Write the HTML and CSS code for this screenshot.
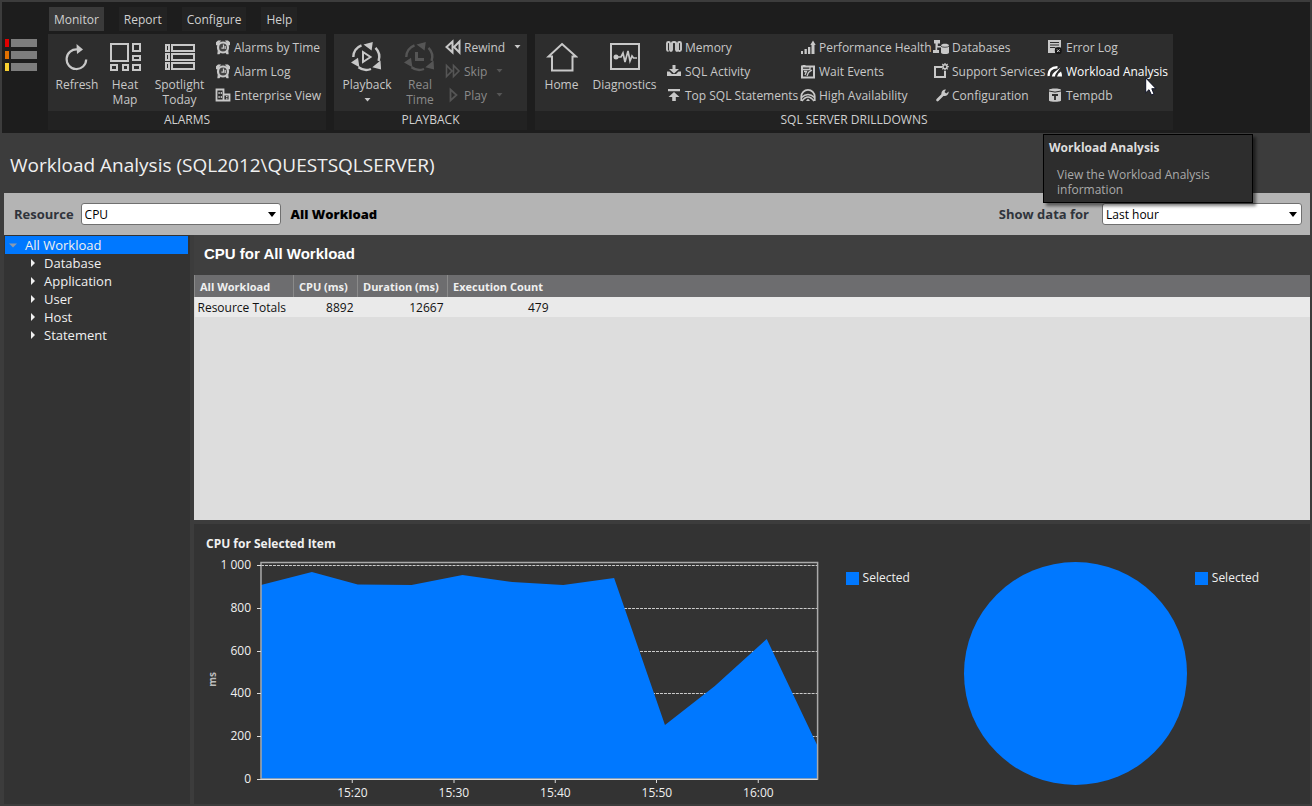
FILE: index.html
```html
<!DOCTYPE html>
<html lang="en">
<head>
<meta charset="utf-8">
<title>Workload Analysis</title>
<link rel="stylesheet" href="styles.css">
</head>
<body class="window">
<svg class="defs" aria-hidden="true">
  <symbol id="clock" viewBox="0 0 16 16"><path d="M3 1.500L13 1.500 15 5.500 13.500 10 14 15H11L8 14 5 15H2L2.500 10 1 5.500z" fill="currentColor" opacity=".15"/><circle cx="8" cy="8.500" r="5" fill="none" stroke="currentColor" stroke-width="2.200"/><path d="M1 6V3.200L3 1.600H6L2.800 6.500zM15 6V3.200L13 1.600H10L13.200 6.500zM2.800 11.500l2.700 2-1 1.700H2.400zM13.200 11.500l-2.700 2 1 1.700h2.100z" fill="currentColor"/><path d="M8.500 5.500V9.200H6.400M10.200 7v3" fill="none" stroke="currentColor" stroke-width="1.200"/></symbol>
  <symbol id="cycle" viewBox="0 0 32 32"><g fill="none" stroke="currentColor" stroke-width="2.4"><path d="M24.5 6.8A13 13 0 0 1 27.6 20"/><path d="M20 28A13 13 0 0 1 7.5 26.3"/><path d="M2.3 16A13 13 0 0 1 10.5 4.3"/></g><path d="M12.5 3.500L21.8 1l-1.200 8.500zM29.500 19.500l.6 9-8.800-2.300zM0 21.500l7-4.800 1.400 9.600z" fill="currentColor"/></symbol>
  <symbol id="down" viewBox="0 0 7 4"><path d="M.5 0H6.500L3.500 3.500z" fill="currentColor"/></symbol>
</svg>

<header class="ribbon">
  <svg class="logo" viewBox="0 0 32 32" aria-label="Spotlight"><path fill="#e00000" d="M0 0h4v8H0z"/><path fill="#e07000" d="M0 12h4v8H0z"/><path fill="#f8d030" d="M0 24h4v8H0z"/><path fill="#7d7d7d" d="M6 0h26v8H6zM6 12h26v8H6zM6 24h26v8H6z"/></svg>
  <div class="ribbon-main">
    <nav class="tabs">
      <button class="tab active">Monitor</button>
      <button class="tab">Report</button>
      <button class="tab">Configure</button>
      <button class="tab">Help</button>
    </nav>
    <div class="groups">
      <section class="group alarms">
        <div class="tools">
          <button class="big"><svg viewBox="0 0 32 32"><path d="M16.5 8.5A9.8 9.8 0 1 0 25.2 18.5" fill="none" stroke="currentColor" stroke-width="2.2"/><path d="M15.5 3L22 8.4 16 13z" fill="currentColor"/></svg>Refresh</button>
          <button class="big"><svg viewBox="0 0 32 32"><path d="M2 3h17v17H2zM24 3h7v7h-7zM24 15h7v4h-7zM2 24h6v5H2zM14 24h5v5h-5zM24 24h7v5h-7z" fill="none" stroke="currentColor" stroke-width="2"/></svg>Heat<br>Map</button>
          <button class="big"><svg viewBox="0 0 32 32"><path d="M2 4h3v6H2zM8 4h22v6H8zM2 13h3v6H2zM8 13h22v6H8zM2 22h3v6H2zM8 22h22v6H8z" fill="none" stroke="currentColor" stroke-width="2"/></svg>Spotlight<br>Today</button>
          <div class="col">
            <button class="small"><svg><use href="#clock"/></svg>Alarms by Time</button>
            <button class="small"><svg><use href="#clock"/></svg>Alarm Log</button>
            <button class="small"><svg viewBox="0 0 16 16"><path d="M1.500 2.500h7v11h-7zM8.500 7.500h6v6h-6" fill="none" stroke="currentColor" stroke-width="1.800"/><path d="M3.500 5h1.200v2H3.500zM5.700 5h1.200v2H5.700zM3.500 9h1.200v2H3.500zM5.700 9h1.200v2H5.700zM11 9h1.500v1.200H11zM11 11.200h1.500v1.200H11z" fill="currentColor"/></svg>Enterprise View</button>
          </div>
        </div>
        <h2 class="caption">ALARMS</h2>
      </section>
      <section class="group playback">
        <div class="tools">
          <button class="big"><svg viewBox="0 0 32 32"><use href="#cycle"/><path d="M12 11l7.500 5-7.500 5z" fill="none" stroke="currentColor" stroke-width="2"/></svg>Playback<svg class="arrow"><use href="#down"/></svg></button>
          <button class="big" disabled><svg viewBox="0 0 32 32"><use href="#cycle"/><path d="M12.500 11v7.500H20" fill="none" stroke="currentColor" stroke-width="3"/></svg>Real<br>Time</button>
          <div class="col">
            <button class="small"><svg viewBox="0 0 16 16"><path d="M7.500 2.500v11L1.500 8zM14.500 2.500v11L9 8z" fill="none" stroke="currentColor" stroke-width="2"/></svg>Rewind<svg class="arrow wide"><use href="#down"/></svg></button>
            <button class="small" disabled><svg viewBox="0 0 16 16"><path d="M1.500 2.500v11L7 8zM8.500 2.500v11L14 8z" fill="none" stroke="currentColor" stroke-width="1.600"/></svg>Skip<svg class="arrow"><use href="#down"/></svg></button>
            <button class="small" disabled><svg viewBox="0 0 16 16"><path d="M5.500 2.500v11l6-5.500z" fill="none" stroke="currentColor" stroke-width="1.800"/></svg>Play<svg class="arrow"><use href="#down"/></svg></button>
          </div>
        </div>
        <h2 class="caption">PLAYBACK</h2>
      </section>
      <section class="group drilldowns">
        <div class="tools">
          <button class="big"><svg viewBox="0 0 32 32"><path d="M16 3L30 15.5H26.500V29.500H6V15.500H2.500z" fill="none" stroke="currentColor" stroke-width="2"/></svg>Home</button>
          <button class="big"><svg viewBox="0 0 32 32"><path d="M2 3h28v25H2z" fill="none" stroke="currentColor" stroke-width="2"/><circle cx="7" cy="16" r="2.500" fill="currentColor"/><path d="M7 16h5l2-4 2 9 3-11 2 10 2-5 1.500 2H28" fill="none" stroke="currentColor" stroke-width="1.700"/></svg>Diagnostics</button>
          <div class="col">
            <button class="small"><svg viewBox="0 0 16 16"><path d="M0 12V3.500L1.500 2h13L16 3.500V12h-2V3.500M0 12h2" fill="none" stroke="currentColor" stroke-width="0"/><path d="M1 4.200Q1 3 2.500 3T4 4.200V10.800Q4 12 5 12T6 10.800V4.200Q6 3 8 3t2 1.200v6.600Q10 12 11 12t1-1.200V4.200Q12 3 13.500 3T15 4.200V10.800Q15 12 13.500 12T12 10.800M1 4.200V10.800Q1 12 2.500 12" fill="none" stroke="currentColor" stroke-width="1.900"/></svg>Memory</button>
            <button class="small"><svg viewBox="0 0 16 16"><path d="M6.500 2h3v4H13L8 10.500 3 6h3.500z" fill="currentColor"/><path d="M1 8.500H3.500L6 11h4l2.500-2.500H15V13H1z" fill="currentColor"/></svg>SQL Activity</button>
            <button class="small"><svg viewBox="0 0 16 16"><path d="M2 2h12v2.200H2zM8 5l5.500 5H9.800v4H6.200v-4H2.500z" fill="currentColor"/></svg>Top SQL Statements</button>
          </div>
          <div class="col">
            <button class="small"><svg viewBox="0 0 16 16"><path d="M1 12h2v3H1zM4.500 10h2.300v5H4.500zM8 8h2.300v7H8zM11.500 6H10.300L13 1.500 15.700 6H14.500v9h-3z" fill="currentColor"/></svg>Performance Health</button>
            <button class="small"><svg viewBox="0 0 16 16"><path d="M2 3.500h12v11H2z" fill="none" stroke="currentColor" stroke-width="2"/><path d="M2 6.500h8V4M4 8.500h2.500L5 12M12 7L8.500 9.500 7 13" fill="none" stroke="currentColor" stroke-width="1.300"/><path d="M2.500 2h3v2h-3z" fill="currentColor"/></svg>Wait Events</button>
            <button class="small"><svg viewBox="0 0 16 16"><path d="M1.300 14V9.500a6.700 6.700 0 0 1 13.400 0V14" fill="none" stroke="currentColor" stroke-width="1.800"/><path d="M1.500 10.500q6.500-6 13 0M2 14q6-8 12 0" fill="none" stroke="currentColor" stroke-width="1.600"/><path d="M6 14l2-2.500 2 2.500z" fill="currentColor"/></svg>High Availability</button>
          </div>
          <div class="col">
            <button class="small"><svg viewBox="0 0 16 16"><path d="M1 1h6v3.500H4.800V7H9v1.400H4.200V11H6v3H0v-3h2.500V4.500H1z" fill="currentColor"/><path d="M8 6.500c0-2.200 8-2.200 8 0v7c0 2-8 2-8 0z" fill="currentColor"/><path d="M8 7.200c1 1.400 7 1.400 8 0" fill="none" stroke="#2d2d2d" stroke-width=".8"/></svg>Databases</button>
            <button class="small"><svg viewBox="0 0 16 16"><path d="M9 4H2v10h10V8" fill="none" stroke="currentColor" stroke-width="2"/><circle cx="12" cy="3.700" r="2" fill="none" stroke="currentColor" stroke-width="1.500"/><path d="M12 0v1.500M12 6v1.500M8.300 3.700H10M14 3.700h1.800M9.300 1l1.200 1.200M13.500 5.200l1.200 1.200M9.300 6.400l1.200-1.200M13.500 2.200L14.700 1" stroke="currentColor" stroke-width="1.200"/></svg>Support Services</button>
            <button class="small"><svg viewBox="0 0 16 16"><path d="M4.500 13L10 7.500" stroke="currentColor" stroke-width="2.600" stroke-linecap="round"/><path d="M13 2.500A4 4 0 0 0 8.500 7.300l2.200 1.600a4 4 0 0 0 5-4.300l-2.500 2-1.700-1.500z" fill="currentColor"/></svg>Configuration</button>
          </div>
          <div class="col">
            <button class="small"><svg viewBox="0 0 16 16"><path d="M1 1h13v7.500H8V14H1z" fill="currentColor"/><path d="M3 3.500h9M3 6h9M3 8.500h5" stroke="#2d2d2d"/><circle cx="11.300" cy="11.700" r="3.500" fill="#161616"/><path d="M10 10.400l2.600 2.600M12.600 10.400L10 13" stroke="currentColor"/></svg>Error Log</button>
            <div class="hint">
              <button class="small hot" aria-describedby="tip"><svg viewBox="0 0 16 16"><path d="M1.800 13C1 7.500 4.500 4.200 10.500 4.300" fill="none" stroke="currentColor" stroke-width="2.400"/><path d="M4.800 13.500Q5 11 7.500 9L13.500 4.500 9 10.500Q8 12 8 13.500z" fill="currentColor"/><path d="M10 13.500l1.500-3L14 8.500q1.200 2.500 1 5z" fill="currentColor"/></svg>Workload Analysis</button>
              <div class="tooltip" id="tip" role="tooltip"><strong>Workload Analysis</strong><p>View the Workload Analysis information</p></div>
              <svg class="pointer" viewBox="0 0 12 19"><path d="M.7.900V15.800L4 12.700 6.500 18 9 17 6.800 11.700H11z" fill="#fff" stroke="#101428"/></svg>
            </div>
            <button class="small"><svg viewBox="0 0 16 16"><path d="M2 3C2 1 14 1 14 3V13.500c0 1.700-12 1.700-12 0z" fill="currentColor"/><path d="M2 4q6 2.200 12 0" fill="none" stroke="#2d2d2d"/><path d="M5 8h6M8 8V13" fill="none" stroke="#2d2d2d" stroke-width="1.800"/></svg>Tempdb</button>
          </div>
        </div>
        <h2 class="caption">SQL SERVER DRILLDOWNS</h2>
      </section>
    </div>
  </div>
</header>

<h1 class="title">Workload Analysis (SQL2012\QUESTSQLSERVER)</h1>

<div class="filters">
  <label for="resource">Resource</label>
  <span class="picker"><select id="resource"><option>CPU</option></select><svg viewBox="0 0 8 5"><path d="M0 0h8L4 5z"/></svg></span>
  <b class="scope">All Workload</b>
  <label class="range" for="range">Show data for</label>
  <span class="picker"><select id="range"><option>Last hour</option></select><svg viewBox="0 0 8 5"><path d="M0 0h8L4 5z"/></svg></span>
</div>

<main class="workspace">
  <ul class="tree">
    <li class="root"><svg viewBox="0 0 8 8"><path d="M0 2.500h8L4 6.500z"/></svg>All Workload</li>
    <li><svg viewBox="0 0 8 8"><path d="M2 0l4 4-4 4z"/></svg>Database</li>
    <li><svg viewBox="0 0 8 8"><path d="M2 0l4 4-4 4z"/></svg>Application</li>
    <li><svg viewBox="0 0 8 8"><path d="M2 0l4 4-4 4z"/></svg>User</li>
    <li><svg viewBox="0 0 8 8"><path d="M2 0l4 4-4 4z"/></svg>Host</li>
    <li><svg viewBox="0 0 8 8"><path d="M2 0l4 4-4 4z"/></svg>Statement</li>
  </ul>
  <div class="content">
    <h2 class="pane-title">CPU for All Workload</h2>
    <div class="grid">
      <table>
        <colgroup><col class="c1"><col class="c2"><col class="c3"><col class="c4"><col></colgroup>
        <thead><tr><th>All Workload</th><th>CPU (ms)</th><th>Duration (ms)</th><th>Execution Count</th><td></td></tr></thead>
        <tbody><tr><td>Resource Totals</td><td>8892</td><td>12667</td><td>479</td><td></td></tr></tbody>
      </table>
    </div>
    <section class="charts">
      <h3>CPU for Selected Item</h3>
      <div class="chart-row">
        <span class="unit">ms</span>
        <div class="y-axis"><span>1 000</span><span>800</span><span>600</span><span>400</span><span>200</span><span>0</span></div>
        <div class="plot">
          <svg viewBox="0 0 563 222" preserveAspectRatio="none" role="img" aria-label="CPU over time">
            <g stroke="#ccc" stroke-dasharray="3 1"><path d="M4 4.500H562M4 47.500H562M4 90.500H562M4 132.500H562M4 175.500H562"/></g>
            <path d="M4 24L55 11 101 23.500 155 24 206 14 256 21 307 24 358 17 409 164 459 125 511 78 562 185V218H4z" fill="#0078ff"/>
            <path d="M4 1.500H562V218H4z" fill="none" stroke="#aaa" stroke-width="1.500"/>
            <path d="M0 4.500H4M0 47.500H4M0 90.500H4M0 132.500H4M0 175.500H4M0 218.500H4M95.500 218v4M197.500 218v4M299 218v4M400.500 218v4M502.500 218v4M4 218.500H562" stroke="#ddd"/>
          </svg>
          <div class="x-axis"><span></span><span>15:20</span><span>15:30</span><span>15:40</span><span>15:50</span><span>16:00</span></div>
        </div>
        <span class="legend first">Selected</span>
        <svg class="pie" viewBox="0 0 223 223" role="img" aria-label="Selected share"><circle cx="111.500" cy="111.500" r="111.500" fill="#0078ff"/></svg>
        <span class="legend">Selected</span>
      </div>
    </section>
  </div>
</main>
</body>
</html>
```
FILE: styles.css
```css
* { box-sizing: border-box; margin: 0; padding: 0; }
.window {
  min-height: 100vh; display: flex; flex-direction: column;
  background: #3c3c3c; color: #d0d0d0;
  font: 12px/15px "Open Sans", "Noto Sans", sans-serif;
}
button, select { font: inherit; color: inherit; border: 0; background: none; }
.defs { position: absolute; width: 0; height: 0; }

.ribbon { display: flex; margin: 2px 2px 0; padding: 5px 0 3px 3px; background: #1d1d1d; }
.logo { width: 32px; height: 32px; margin: 32px 11px 0 0; flex: none; }
.ribbon-main { flex: 1; }
.tabs { display: flex; gap: 15px; padding-left: 1px; }
.tab { height: 24px; padding: 0 5px; background: #232323; }
.tab.active { background: #3a3a3a; }
.groups { display: flex; gap: 8px; margin-top: 3px; }
.group { background: #2d2d2d; }
.tools { display: grid; height: 77px; padding: 1px 0 4px; }
.alarms .tools { grid-template-columns: 58px 38px 71px 111px; }
.playback .tools { grid-template-columns: 66px 40px 87px; }
.drilldowns .tools { grid-template-columns: 53px 73px 5px 134px 133px 114px 126px; }
.drilldowns .col:nth-child(3) { grid-column: 4; }
.playback .col { padding-left: 5px; }
.caption { height: 19px; background: #222; font-size: 12px; font-weight: 400; line-height: 18px; text-align: center; }
.big { display: flex; flex-direction: column; align-items: center; padding-top: 6px; white-space: nowrap; }
.big svg { flex: none; display: block; width: 32px; height: 32px; }
.big > svg:first-child { margin-bottom: 4px; }
.big .arrow { width: 7px; height: 4px; margin-top: 6px; }
.col { display: grid; grid-auto-rows: 24px; }
.small { display: flex; align-items: center; gap: 3px; height: 24px; white-space: nowrap; }
.small svg { flex: none; width: 16px; height: 16px; }
.small .arrow { width: 7px; height: 4px; margin-left: 6px; }
.big, .small { color: #c8c8c8; }
.big:disabled, .small:disabled { color: #8a8a8a; }
.big:disabled svg, .small:disabled svg { color: #555; }
.hint { position: relative; }
.small.hot { color: #fff; }
.tooltip {
  position: absolute; z-index: 1; top: 75px; left: -4px; width: 210px; padding: 5px;
  background: #2d2d2d; border: 1px solid #000; box-shadow: 3px 3px 3px rgb(0 0 0 / 50%);
  color: #ddd;
}
.tooltip p { margin: 12px 8px 0; color: #aaa; }
.pointer { position: absolute; z-index: 2; top: 18px; left: 98px; width: 12px; height: 19px; }

.title { padding: 20px 10px 16px; color: #f0f0f0; font-size: 19px; font-weight: 400; line-height: 24px; }

.filters { display: flex; align-items: center; height: 42px; margin: 0 2px 0 4px; padding: 0 8px 0 10px; background: #b4b4b4; color: #000; font-size: 13px; font-weight: 700; }
.filters label { color: #30343c; }
.filters .range { margin-left: auto; }
.picker { display: grid; align-items: center; width: 200px; margin: 0 10px 0 7px; font-size: 12px; font-weight: 400; }
.range + .picker { margin: 0 0 0 13px; }
.picker select, .picker svg { grid-area: 1 / 1; }
.picker select { appearance: none; height: 22px; padding: 0 3px; border: 1px solid #707070; border-radius: 3px; background: #fff; }
.picker svg { justify-self: end; width: 8px; height: 5px; margin-right: 5px; pointer-events: none; }

.workspace { flex: 1; display: flex; gap: 4px; margin: 0 2px 2px 4px; }
.tree { width: 186px; flex: none; padding: 1px 2px 0 1px; background: #333; color: #f0f0f0; font-size: 13px; list-style: none; }
.tree li { display: flex; align-items: center; gap: 7px; height: 18px; padding-left: 24px; }
.tree svg { width: 8px; height: 8px; fill: #f0f0f0; }
.tree .root { gap: 8px; padding-left: 4px; background: #0078ff; }
.tree .root svg { fill: #8a9ab0; }
.content { flex: 1; min-width: 0; display: flex; flex-direction: column; }
.pane-title { padding: 9px 10px 11px; background: #3f3f3f; color: #fff; font: bold 15px/20px "Liberation Sans", Arial, sans-serif; }
.grid { flex: 1; min-height: 60px; background: #ddd; }
table { width: 100%; table-layout: fixed; border-collapse: collapse; color: #111; }
.c1 { width: 99px; } .c2 { width: 64px; } .c3 { width: 90px; } .c4 { width: 105px; }
thead { background: #6d6d6f; color: #f0f0f0; }
th { height: 22px; padding: 0 5px; border-left: 1px solid #8a8a8a; font-size: 11px; text-align: left; white-space: nowrap; }
tbody { background: #eaeaea; font-size: 12px; }
tbody td { height: 20px; padding: 0 4px 0 3px; text-align: right; white-space: nowrap; }
tbody td:first-child { text-align: left; }

.charts { margin-top: 4px; padding: 12px 53px 3px 12px; background: #333; color: #f0f0f0; }
.charts h3 { font-size: 12px; line-height: 16px; }
.chart-row { display: flex; margin-top: 5px; line-height: 16px; }
.unit { align-self: center; width: 12px; color: #bbb; font-size: 10px; font-weight: 700; line-height: 12px; writing-mode: vertical-rl; transform: rotate(180deg); }
.y-axis { display: flex; flex-direction: column; justify-content: space-between; width: 33px; height: 230px; text-align: right; }
.plot { flex: 1; margin-left: 6px; padding-top: 4px; }
.plot svg { display: block; width: 100%; height: 222px; }
.x-axis { display: grid; grid-template-columns: 73fr repeat(5, 182fr) 17fr; padding: 2px 0 0 4px; text-align: center; }
.legend { display: flex; align-items: center; gap: 4px; height: 16px; margin: 13px 0 0 8px; }
.legend::before { content: ""; width: 13px; height: 13px; background: #0078ff; }
.legend.first { margin: 13px 54px 0 27px; }
.pie { flex: none; width: 223px; height: 223px; margin-top: 5px; }
.charts { padding-right: 51px; }
```
